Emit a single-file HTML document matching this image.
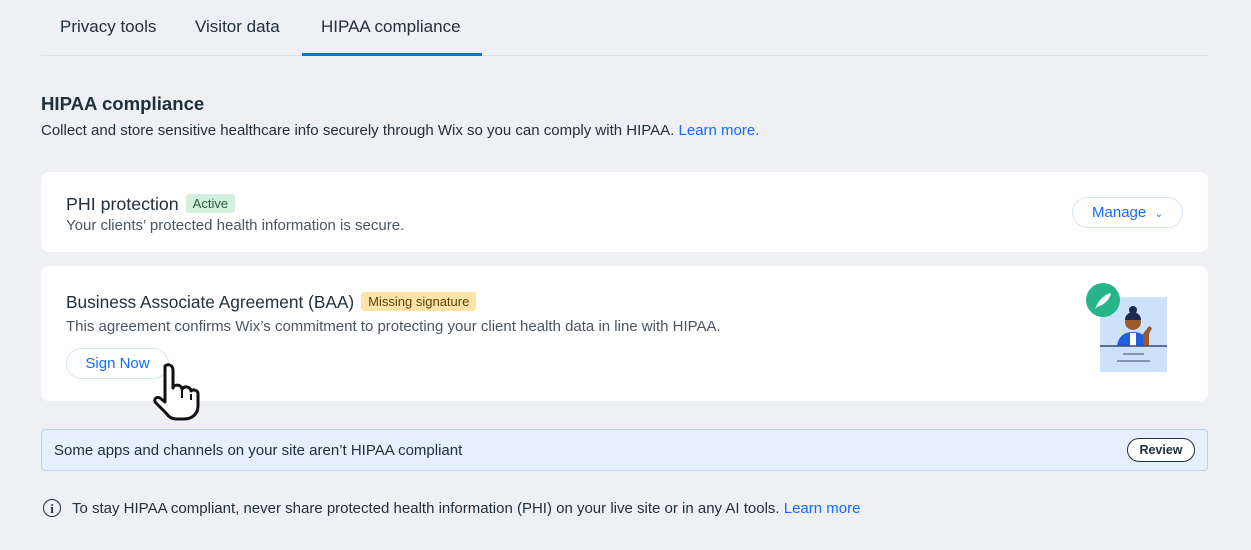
<!DOCTYPE html>
<html><head><style>
body{margin:0;width:1251px;height:550px;background:#eef0f3;font-family:"Liberation Sans",sans-serif;color:#20303c;position:relative;overflow:hidden}
.a{position:absolute}
.card{position:absolute;left:41px;width:1167px;background:#fff;border-radius:8px}
.blue{color:#116dff}
.badge{display:inline-block;font-size:13px;padding:2px 7px;border-radius:3px;vertical-align:2px;margin-left:7px}
.sub{font-size:15px;color:#4a5562}
.btn{position:absolute;border:1px solid #d6e4fb;border-radius:18px;background:#fff;color:#116dff;font-size:15px;text-align:center}
</style></head><body>
<div class="a" style="left:60px;top:17px;font-size:17px">Privacy tools</div>
<div class="a" style="left:195px;top:17px;font-size:17px">Visitor data</div>
<div class="a" style="left:321px;top:17px;font-size:17px">HIPAA compliance</div>
<div class="a" style="left:41px;top:55px;width:1167px;height:1px;background:#dfe3e8"></div>
<div class="a" style="left:302px;top:53px;width:180px;height:3px;background:#116dff"></div>
<div class="a" style="left:41px;top:93px;font-size:18.6px;font-weight:bold">HIPAA compliance</div>
<div class="a" style="left:41px;top:122px;font-size:15px">Collect and store sensitive healthcare info securely through Wix so you can comply with HIPAA. <span class="blue">Learn more.</span></div>
<div class="card" style="top:172px;height:80px">
 <div class="a" style="left:25px;top:22px;font-size:17.8px">PHI protection<span class="badge" style="background:#d3f0dd;color:#24603a">Active</span></div>
 <div class="a sub" style="left:25px;top:45px">Your clients’ protected health information is secure.</div>
 <div class="btn" style="left:1031px;top:25px;width:109px;height:29px;line-height:29px">Manage &nbsp;<span style="font-size:10px">⌄</span></div>
</div>
<div class="card" style="top:266px;height:135px">
 <div class="a" style="left:25px;top:26px;font-size:17.3px">Business Associate Agreement (BAA)<span class="badge" style="background:#fde3a7;color:#5a4300">Missing signature</span></div>
 <div class="a sub" style="left:25px;top:52px">This agreement confirms Wix’s commitment to protecting your client health data in line with HIPAA.</div>
 <div class="btn" style="left:25px;top:82px;width:101px;height:29px;line-height:29px">Sign Now</div>
 <svg class="a" style="left:1042px;top:16px" width="90" height="95">
  <rect x="17" y="15" width="67" height="75" fill="#cce2fb"/>
  <circle cx="50" cy="28" r="4" fill="#1d2a4f"/>
  <circle cx="50" cy="40" r="8" fill="#9a5a2a"/>
  <path d="M42 38a8 8 0 0 1 16 0z" fill="#1d2a4f"/>
  <path d="M34 64q2-14 16-14q14 0 16 14z" fill="#1f5fe0"/>
  <rect x="47" y="51" width="6" height="13" fill="#fff"/>
  <path d="M60 64v-12l6-8 3 2-3 6v12z" fill="#9a5a2a"/>
  <line x1="17" y1="64" x2="84" y2="64" stroke="#3a4a70" stroke-width="1.5"/>
  <line x1="40" y1="72" x2="61" y2="72" stroke="#3a4a70"/>
  <line x1="34" y1="79" x2="67" y2="79" stroke="#3a4a70"/>
  <circle cx="20" cy="18" r="17" fill="#27b48a"/>
  <path d="M12 27q6-14 16-16q-2 10-14 14" fill="#fff"/>
 </svg>
</div>
<svg class="a" style="left:145px;top:360px" width="62" height="62"><path d="M20 6c4-3 8 0 8 4v18c1-4 8-4 9 1c2-3 8-3 9 2c2-2 7-1 7 3v12c0 8-6 13-14 13h-8c-5 0-8-3-10-6l-10-10c-3-3 0-7 4-5l5 4V10c0-2 0-3 0-4z" fill="#fff" stroke="#111" stroke-width="3" stroke-linejoin="round"/><path d="M37 30v8M46 34v6" stroke="#111" stroke-width="2"/></svg>
<div class="a" style="left:41px;top:429px;width:1165px;height:40px;background:#e6effd;border:1px solid #b9d0f8;border-radius:4px">
 <div class="a" style="left:12px;top:12px;font-size:15px">Some apps and channels on your site aren’t HIPAA compliant</div>
 <div class="a" style="left:1085px;top:8px;width:66px;height:22px;border:1px solid #20303c;border-radius:12px;background:#fff;font-size:12.5px;font-weight:bold;text-align:center;line-height:22px">Review</div>
</div>
<div class="a" style="left:43px;top:499px;width:18px;height:18px;border:1.5px solid #20303c;border-radius:50%;font-size:13px;font-weight:bold;text-align:center;line-height:18px;font-family:'Liberation Serif',serif;box-sizing:border-box">i</div>
<div class="a" style="left:72px;top:500px;font-size:15px">To stay HIPAA compliant, never share protected health information (PHI) on your live site or in any AI tools. <span class="blue">Learn more</span></div>
</body></html>
